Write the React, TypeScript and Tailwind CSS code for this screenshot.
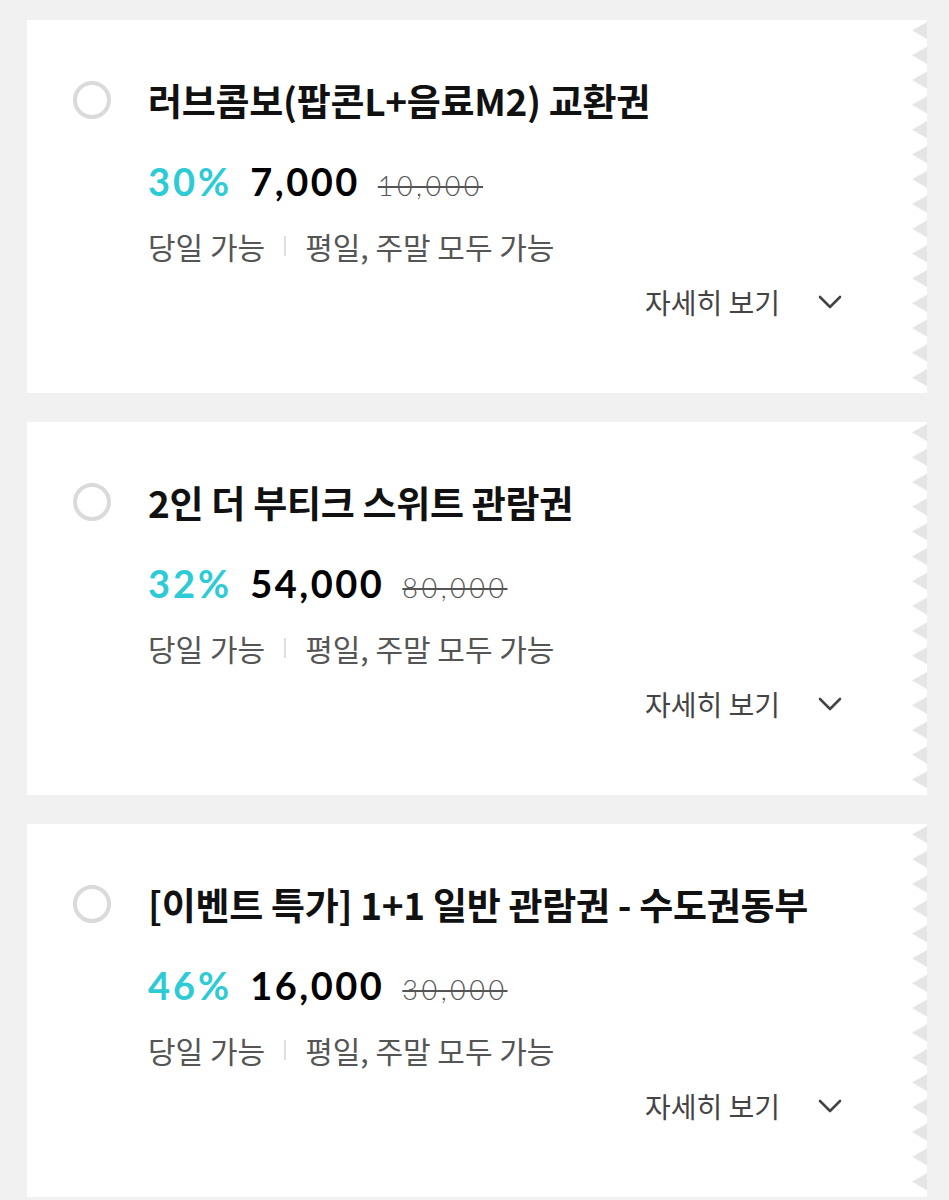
const tickets = [
  {
    title: "러브콤보(팝콘L+음료M2) 교환권",
    rate: "30%",
    price: "7,000",
    original: "10,000",
  },
  {
    title: "2인 더 부티크 스위트 관람권",
    rate: "32%",
    price: "54,000",
    original: "80,000",
  },
  {
    title: "[이벤트 특가] 1+1 일반 관람권 - 수도권동부",
    rate: "46%",
    price: "16,000",
    original: "30,000",
  },
];

const kr = { fontFamily: '"Noto Sans CJK KR", "Noto Sans", sans-serif' };
const num = { fontFamily: 'Lato, "Noto Sans", sans-serif' };

function Zigzag() {
  return (
    <svg
      className="absolute right-0 top-0 h-full w-[15px]"
      aria-hidden="true"
    >
      <defs>
        <pattern
          id="saw"
          width="15"
          height="24.8"
          patternUnits="userSpaceOnUse"
        >
          <polygon points="15,2 0,10.5 15,19" fill="#e5e5e5" />
        </pattern>
      </defs>
      <rect width="100%" height="100%" fill="url(#saw)" />
    </svg>
  );
}

function TicketCard({
  title,
  rate,
  price,
  original,
}: {
  title: string;
  rate: string;
  price: string;
  original: string;
}) {
  return (
    <div className="relative h-[373px] bg-white pl-[46px] pr-[85px] pt-[60px]">
      <div className="flex items-center gap-[37px]">
        <span className="h-[38px] w-[38px] shrink-0 rounded-full border-[4px] border-[#dadada]" />
        <h2
          className="whitespace-nowrap text-[37px] font-bold leading-[40px] tracking-[-0.3px] text-[#111]"
          style={kr}
        >
          {title}
        </h2>
      </div>

      <div className="ml-[75px] mt-[39px]">
        <div className="flex items-baseline leading-[44px]" style={num}>
          <span className="text-[38px] font-bold tracking-[3px] text-[#2ccbd5]">
            {rate}
          </span>
          <span className="ml-[18px] text-[38px] font-bold tracking-[2.5px] text-black">
            {price}
          </span>
          <span className="ml-[18px] text-[27px] font-light tracking-[3.5px] text-[#555] line-through decoration-[#555] decoration-2">
            {original}
          </span>
        </div>

        <div
          className="mt-[20px] flex items-center text-[30px] leading-[36px] text-[#555]"
          style={kr}
        >
          <span>당일 가능</span>
          <span className="mx-[19px] h-[20px] w-[2px] bg-[#e0e0e0]" />
          <span>평일, 주말 모두 가능</span>
        </div>
      </div>

      <div
        className="mt-[21px] flex items-center justify-end gap-[38px] text-[28px] leading-[34px] text-[#444]"
        style={kr}
      >
        <span>자세히 보기</span>
        <svg width="24" height="14" viewBox="0 0 24 14" fill="none">
          <polyline
            points="2,2 12,12 22,2"
            stroke="#444"
            strokeWidth="2.6"
            strokeLinecap="round"
            strokeLinejoin="round"
          />
        </svg>
      </div>

      <Zigzag />
    </div>
  );
}

export default function App() {
  return (
    <div className="flex min-h-[1200px] flex-col gap-[29px] bg-[#f1f1f1] pl-[27px] pr-[22px] pt-[20px]">
      {tickets.map((t) => (
        <TicketCard key={t.title} {...t} />
      ))}
    </div>
  );
}
